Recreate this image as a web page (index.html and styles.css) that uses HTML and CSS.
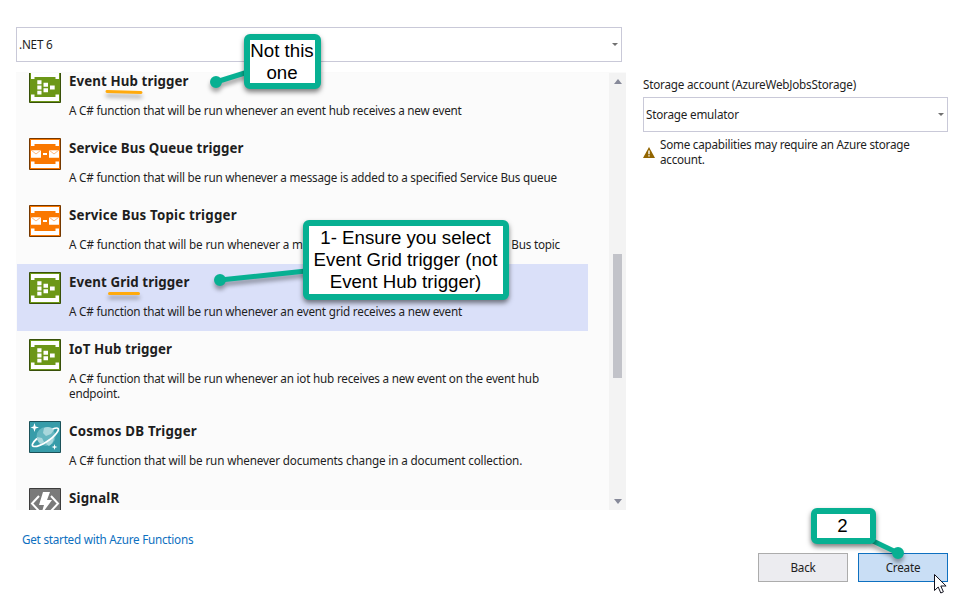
FILE: index.html
```html
<!DOCTYPE html>
<html lang="en">
<head>
<meta charset="utf-8">
<title>Azure Functions</title>
<link rel="stylesheet" href="styles.css">
</head>
<body>
<svg class="defs" aria-hidden="true">
  <symbol id="hub" viewBox="0 0 32 32">
    <path fill="#6c9717" stroke="#385009" d="M.5.5h31v31H.5z"/>
    <path fill="#fff" d="M2 2h28v6h-3.500V6h-21v2H2zM2 30h28v-6.500h-3.500V26h-21v-2.500H2zM8.300 9.300h4.200v3.900H8.300zM8.300 14.500h4.200v3.900H8.300zM8.300 19.700h4.200v3.900H8.300zM14.500 11.800H19v4h-4.500zM14.500 17.200H19v4h-4.500zM21 14.400h4.700v4H21z"/>
  </symbol>
  <symbol id="bus" viewBox="0 0 32 32">
    <path fill="#fa7800" stroke="#743800" d="M.5.5h31v31H.5z"/>
    <path fill="#fff" d="M2 2h28v6h-3.500V6h-21v2H2zM2 30h28v-6.500h-3.500V26h-21v-2.500H2zM2 12.300h10v7.400H2zM20 12.300h10v7.400H20zM14 15h4v2h-4z"/>
    <path fill="none" stroke="#fda45a" stroke-width=".8" d="m2 12 5 4 5-4M20 12l5 4 5-4"/>
  </symbol>
  <symbol id="cosmos" viewBox="0 0 32 32">
    <path fill="#379ca9" stroke="#1b5159" d="M.5.5h31v31H.5z"/>
    <circle cx="17" cy="15.500" r="9.500" fill="#65b6c0"/>
    <path fill="#a8d7dc" d="M15 7c4-2 8-.5 10 2l-3 4-5 2-3-3zM8 16l5 1 2 4-3 2c-3-2-4-4-4-7zM19 19l6-3c0 4-2 7-5 9l-3-2z"/>
    <path fill="none" stroke="#fff" stroke-width="1.700" d="M23.500 8C30 5.500 30.500 8 28 11.500 24 17.500 11 26 5 25.500c-3-.3-2-3.500 3-8"/>
    <path fill="#fff" d="m5.500 2 1.100 3.400L10 6.500 6.600 7.600 5.500 11 4.400 7.600 1.500 6.500l2.900-1.100zM25.500 23l.7 2.300 2.300.7-2.300.7-.7 2.300-.7-2.300-2.300-.7 2.300-.7z"/>
  </symbol>
  <symbol id="func" viewBox="0 0 32 32">
    <path fill="#7a7a7a" stroke="#3c3c3c" d="M.5.5h31v31H.5z"/>
    <path fill="none" stroke="#fff" stroke-width="2" d="m10 8-7 7.500 7 7.500M22 8l7 7.500-7 7.500"/>
    <path fill="#fff" d="M14 4h7l-3 8h5L12 27l3-10h-5z"/>
  </symbol>
</svg>
<main class="dialog">
  <section class="left">
    <div class="combo runtime"><span class="net">.NET 6</span><i class="caret"></i></div>
    <div class="listbox">
      <div class="items">
        <article class="item"><svg class="icon"><use href="#hub"/></svg><div><h3>Event Hub trigger</h3><p>A C# function that will be run whenever an event hub receives a new event</p></div></article>
        <article class="item"><svg class="icon"><use href="#bus"/></svg><div><h3>Service Bus Queue trigger</h3><p>A C# function that will be run whenever a message is added to a specified Service Bus queue</p></div></article>
        <article class="item"><svg class="icon"><use href="#bus"/></svg><div><h3 class="wide">Service Bus Topic trigger</h3><p class="split"><span class="wide">A C# function that will be run whenever a m</span><span>Bus topic</span></p></div></article>
        <article class="item selected"><svg class="icon"><use href="#hub"/></svg><div><h3>Event Grid trigger</h3><p>A C# function that will be run whenever an event grid receives a new event</p></div></article>
        <article class="item"><svg class="icon"><use href="#hub"/></svg><div><h3>IoT Hub trigger</h3><p>A C# function that will be run whenever an iot hub receives a new event on the event hub<br>endpoint.</p></div></article>
        <article class="item"><svg class="icon"><use href="#cosmos"/></svg><div><h3 class="wide">Cosmos DB Trigger</h3><p class="wide">A C# function that will be run whenever documents change in a document collection.</p></div></article>
        <article class="item"><svg class="icon"><use href="#func"/></svg><div><h3 class="wide">SignalR</h3></div></article>
      </div>
      <div class="scrollbar"><i class="up"></i><i class="thumb"></i><i class="down"></i></div>
    </div>
    <a class="link">Get started with Azure Functions</a>
  </section>
  <section class="right">
    <label class="label">Storage account (AzureWebJobsStorage)</label>
    <div class="combo"><span>Storage emulator</span><i class="caret"></i></div>
    <div class="warning">
      <svg width="12" height="11" viewBox="0 0 12 11"><path fill="#926500" d="M6 0 12 11H0z"/><path fill="#fff" d="M5.300 3.500h1.400v3.800H5.300zM5.300 8.200h1.400v1.300H5.300z"/></svg>
      <p>Some capabilities may require an Azure storage<br>account.</p>
    </div>
    <div class="buttons"><button>Back</button><button class="primary">Create</button></div>
  </section>
</main>
<svg class="overlay" width="978" height="610" aria-hidden="true">
  <g class="shadow" fill="#07b092" stroke="#07b092" stroke-width="5">
    <path d="m216 82 32-10"/><circle cx="216" cy="82" r="3.500"/>
    <path d="m220 280 86-9"/><circle cx="220" cy="280" r="3.500"/>
    <path d="m873 541 25 12"/><circle cx="898" cy="553" r="3.500"/>
  </g>
  <g class="shadow" fill="none" stroke="#ffaa0d" stroke-width="3" stroke-linecap="round"><path d="m107 91.500 34 1M109.500 293.500h29"/></g>
</svg>
<div class="callout not-this">Not this<br>one</div>
<div class="callout step-one">1- Ensure you select<br>Event Grid trigger (not<br>Event Hub trigger)</div>
<div class="callout step-two">2</div>
<svg class="cursor" width="13" height="20" viewBox="0 0 13 20"><path fill="#fff" stroke="#10101c" d="M.5.5v16l3.700-3.500 2.600 6 2.600-1.200-2.600-5.800h5.300z"/></svg>
</body>
</html>
```
FILE: styles.css
```css
* { box-sizing: border-box; }
body { margin: 0; width: 978px; height: 610px; overflow: hidden; background: #fff; color: #1e1e1e; font: 11.7px/15px "Noto Sans", "Open Sans", sans-serif; letter-spacing: -0.21px; }
h3, p { margin: 0; }
.defs { display: none; }
.dialog { display: flex; gap: 17px; padding: 27px 30px 0 16px; height: 610px; }
.left { width: 610px; }
.combo { display: flex; align-items: center; justify-content: space-between; height: 35px; border: 1px solid #c9c9d8; padding: 0 3px 0 2px; white-space: nowrap; }
.runtime { width: 606px; }
.caret { border: 3px solid transparent; border-top-color: #717171; border-bottom: 0; }
.listbox { display: flex; height: 438px; margin-top: 10px; border-top: 1px solid #fafafa; background: #fbfbfb; overflow: hidden; }
.items { width: 593px; margin-top: -10px; padding-left: 1px; }
.item { display: flex; gap: 8px; width: 571px; min-height: 67px; padding: 8px 0 12px 12px; }
.item p { white-space: nowrap; }
.item .split { display: flex; justify-content: space-between; width: 491px; }
.selected { background: #dae0f9; }
.icon { width: 32px; height: 32px; flex: none; }
h3 { font-size: 13.3px; line-height: 20px; font-weight: 700; letter-spacing: 0.1px; margin-bottom: 12px; white-space: nowrap; }
.wide { letter-spacing: -0.15px; }
h3.wide { letter-spacing: 0.2px; }
.scrollbar { display: flex; flex-direction: column; align-items: center; width: 17px; height: 437px; padding: 6px 0; background: #f3f3f3; }
.up, .down { border: 4.500px solid transparent; }
.up { border-bottom: 5px solid #868999; border-top: 0; }
.down { border-top: 5px solid #868999; border-bottom: 0; margin-top: auto; }
.thumb { width: 9px; height: 124px; margin-top: 170px; background: #c2c3c9; }
.link { display: block; margin: 22px 0 0 6px; color: #0e70c0; letter-spacing: -0.24px; }
.right { display: flex; flex-direction: column; width: 305px; padding-top: 50px; }
.label { margin-bottom: 5px; white-space: nowrap; }
.warning { display: flex; gap: 5px; margin-top: 5px; white-space: nowrap; letter-spacing: -0.25px; }
.warning svg { margin-top: 10px; flex: none; }
.buttons { display: flex; gap: 10px; justify-content: flex-end; margin-top: 386px; }
button { width: 90px; height: 29px; padding: 0; border: 1px solid #acacac; background: #ececf0; color: inherit; font: inherit; letter-spacing: inherit; }
.primary { border-color: #0e70c0; background: #c9def5; }
.overlay { position: absolute; left: 0; top: 0; }
.shadow { filter: drop-shadow(0 4px 2px rgba(0, 0, 0, 0.35)); }
.callout { position: absolute; display: flex; align-items: center; justify-content: center; border: 6px solid #07b092; border-radius: 6px; background: #fff; box-shadow: 0 3px 5px rgba(0, 0, 0, 0.5); color: #000; font: 18.7px/22px "Liberation Sans", Arial, sans-serif; letter-spacing: 0; text-align: center; white-space: nowrap; }
.not-this { left: 244px; top: 34px; width: 77px; height: 55px; padding-right: 1px; }
.step-one { left: 303px; top: 220px; width: 206px; height: 80px; padding-right: 1px; }
.step-two { left: 811px; top: 508px; width: 65px; height: 36px; padding-right: 2px; }
.cursor { position: absolute; left: 934px; top: 574px; }
```
